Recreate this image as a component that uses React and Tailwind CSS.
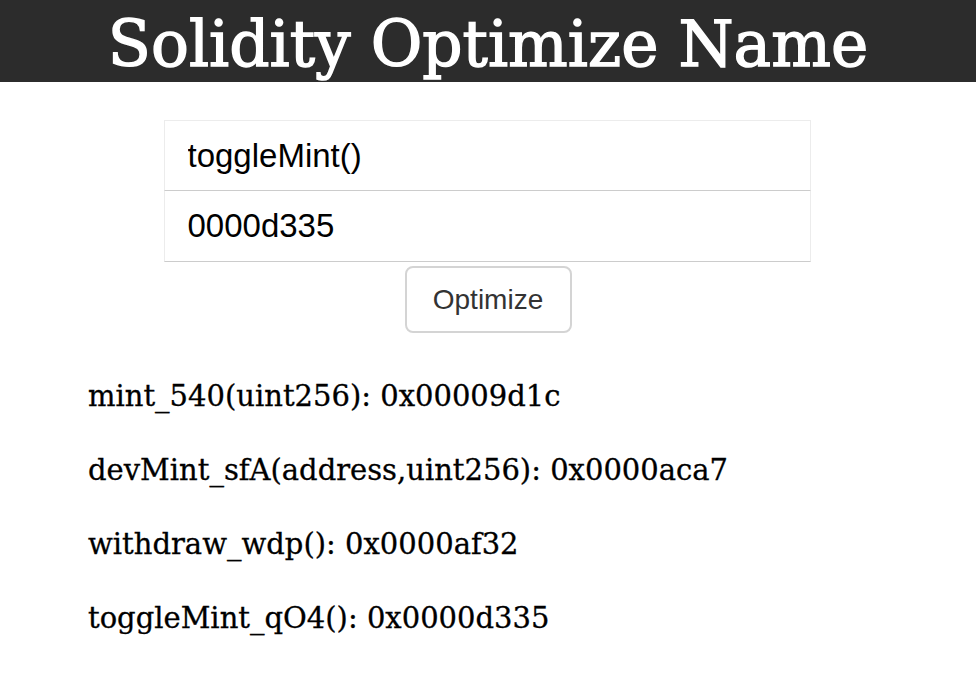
import React, { useState } from 'react';

const results = [
  'mint_540(uint256): 0x00009d1c',
  'devMint_sfA(address,uint256): 0x0000aca7',
  'withdraw_wdp(): 0x0000af32',
  'toggleMint_qO4(): 0x0000d335',
];

export default function App() {
  const [name, setName] = useState('toggleMint()');
  const [target, setTarget] = useState('0000d335');

  const slab = { fontFamily: '"DejaVu Serif", serif' };
  const sans = { fontFamily: '"Liberation Sans", Arial, sans-serif' };

  return (
    <div className="min-h-screen bg-white">
      <header className="bg-[#2c2c2c] h-[82px] flex items-center justify-center">
        <h1
          style={slab}
          className="text-white text-[63px] font-normal leading-none pt-[6px] [-webkit-text-stroke:1.4px_white]"
        >
          Solidity Optimize Name
        </h1>
      </header>

      <div className="flex flex-col items-center pt-[38px]">
        <div className="w-[647px] -ml-[2px] flex flex-col" style={sans}>
          <input
            value={name}
            onChange={(e) => setName(e.target.value)}
            className="h-[71px] pl-[23px] pr-6 text-[33px] text-black border border-[#ececec] border-b-[#cccccc] outline-none"
          />
          <input
            value={target}
            onChange={(e) => setTarget(e.target.value)}
            className="h-[71px] pl-[23px] pr-6 text-[33px] text-black border border-[#ececec] border-t-0 border-b-[#cccccc] outline-none"
          />
        </div>
        <button
          style={sans}
          className="mt-[4px] w-[167px] h-[67px] border-2 border-[#d4d4d4] rounded-lg text-[28px] text-[#333333] bg-white"
        >
          Optimize
        </button>
      </div>

      <ul
        style={slab}
        className="pl-[88px] pt-[46px] flex flex-col gap-[40px] text-[29px] text-black leading-[34px] [-webkit-text-stroke:0.3px_black]"
      >
        {results.map((r) => (
          <li key={r}>{r}</li>
        ))}
      </ul>
    </div>
  );
}
